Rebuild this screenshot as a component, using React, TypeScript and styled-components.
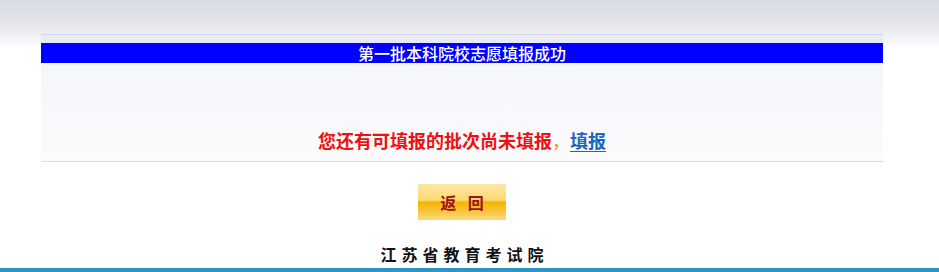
import React from 'react'
import styled, { createGlobalStyle } from 'styled-components';

const GlobalStyle = createGlobalStyle`
body {
  margin: 0;
  background: #fff linear-gradient(#d8dbe3 0px, #e6e8ed 28px, #ffffff 48px) no-repeat;
  font-family: "Noto Sans CJK SC", "Liberation Serif", serif;
}
`

function App() {
    return (
        <>
        <GlobalStyle />
        <Page>
            <Column>
                <Panel>
                    <TopStrip />
                    <TitleBar>第一批本科院校志愿填报成功</TitleBar>
                    <PanelBody>
                        <Message>
                            您还有可填报的批次尚未填报<Comma>，</Comma><FillLink href='#'>填报</FillLink>
                        </Message>
                    </PanelBody>
                </Panel>
                <ButtonRow>
                    <BackButton type='button'>返&nbsp;回</BackButton>
                </ButtonRow>
                <Footer>江苏省教育考试院</Footer>
            </Column>
            <BottomBar />
        </Page>
        </>
    )
}

export default App;

const Page = styled.div`
width: 939px;
height: 272px;
overflow: hidden;
display: flex;
flex-direction: column;
`

const Column = styled.div`
width: 842px;
margin-left: 41px;
padding-top: 34px;
display: flex;
flex-direction: column;
`

const Panel = styled.div`
border-top: 1px solid #d3d7df;
border-bottom: 1px solid #dcdcde;
display: flex;
flex-direction: column;
`

const TopStrip = styled.div`
height: 8px;
background: #e8ebf4;
`

const TitleBar = styled.div`
height: 20px;
background: #0000ff;
color: #ffffff;
font-size: 16px;
font-weight: 500;
line-height: 20px;
text-align: center;
`

const PanelBody = styled.div`
height: 98px;
background: linear-gradient(#f5f6fa, #fbfbfd);
display: flex;
align-items: flex-end;
justify-content: center;
box-sizing: border-box;
`

const Message = styled.div`
color: #ee1111;
font-size: 18px;
font-weight: bold;
line-height: 24px;
margin-bottom: 9px;
`

const Comma = styled.span`
color: #e8900c;
font-weight: normal;
`

const FillLink = styled.a`
color: #1a66c0;
text-decoration: underline;
text-underline-offset: 3px;
`

const ButtonRow = styled.div`
display: flex;
justify-content: center;
padding-top: 22px;
`

const BackButton = styled.button`
width: 88px;
height: 36px;
border: none;
padding: 0 0 0 4px;
background: linear-gradient(#fde8a4 0%, #fbd871 45%, #f5b500 50%, #f8c53a 75%, #fcda80 100%);
color: #a01020;
font-family: "Noto Sans CJK SC", serif;
font-size: 16px;
font-weight: bold;
letter-spacing: 4px;
`

const Footer = styled.div`
margin-top: 24px;
text-align: center;
font-size: 16px;
font-weight: bold;
color: #111;
letter-spacing: 5px;
padding-left: 5px;
line-height: 20px;
`

const BottomBar = styled.div`
margin-top: auto;
height: 4px;
background: #2a95c4;
`
